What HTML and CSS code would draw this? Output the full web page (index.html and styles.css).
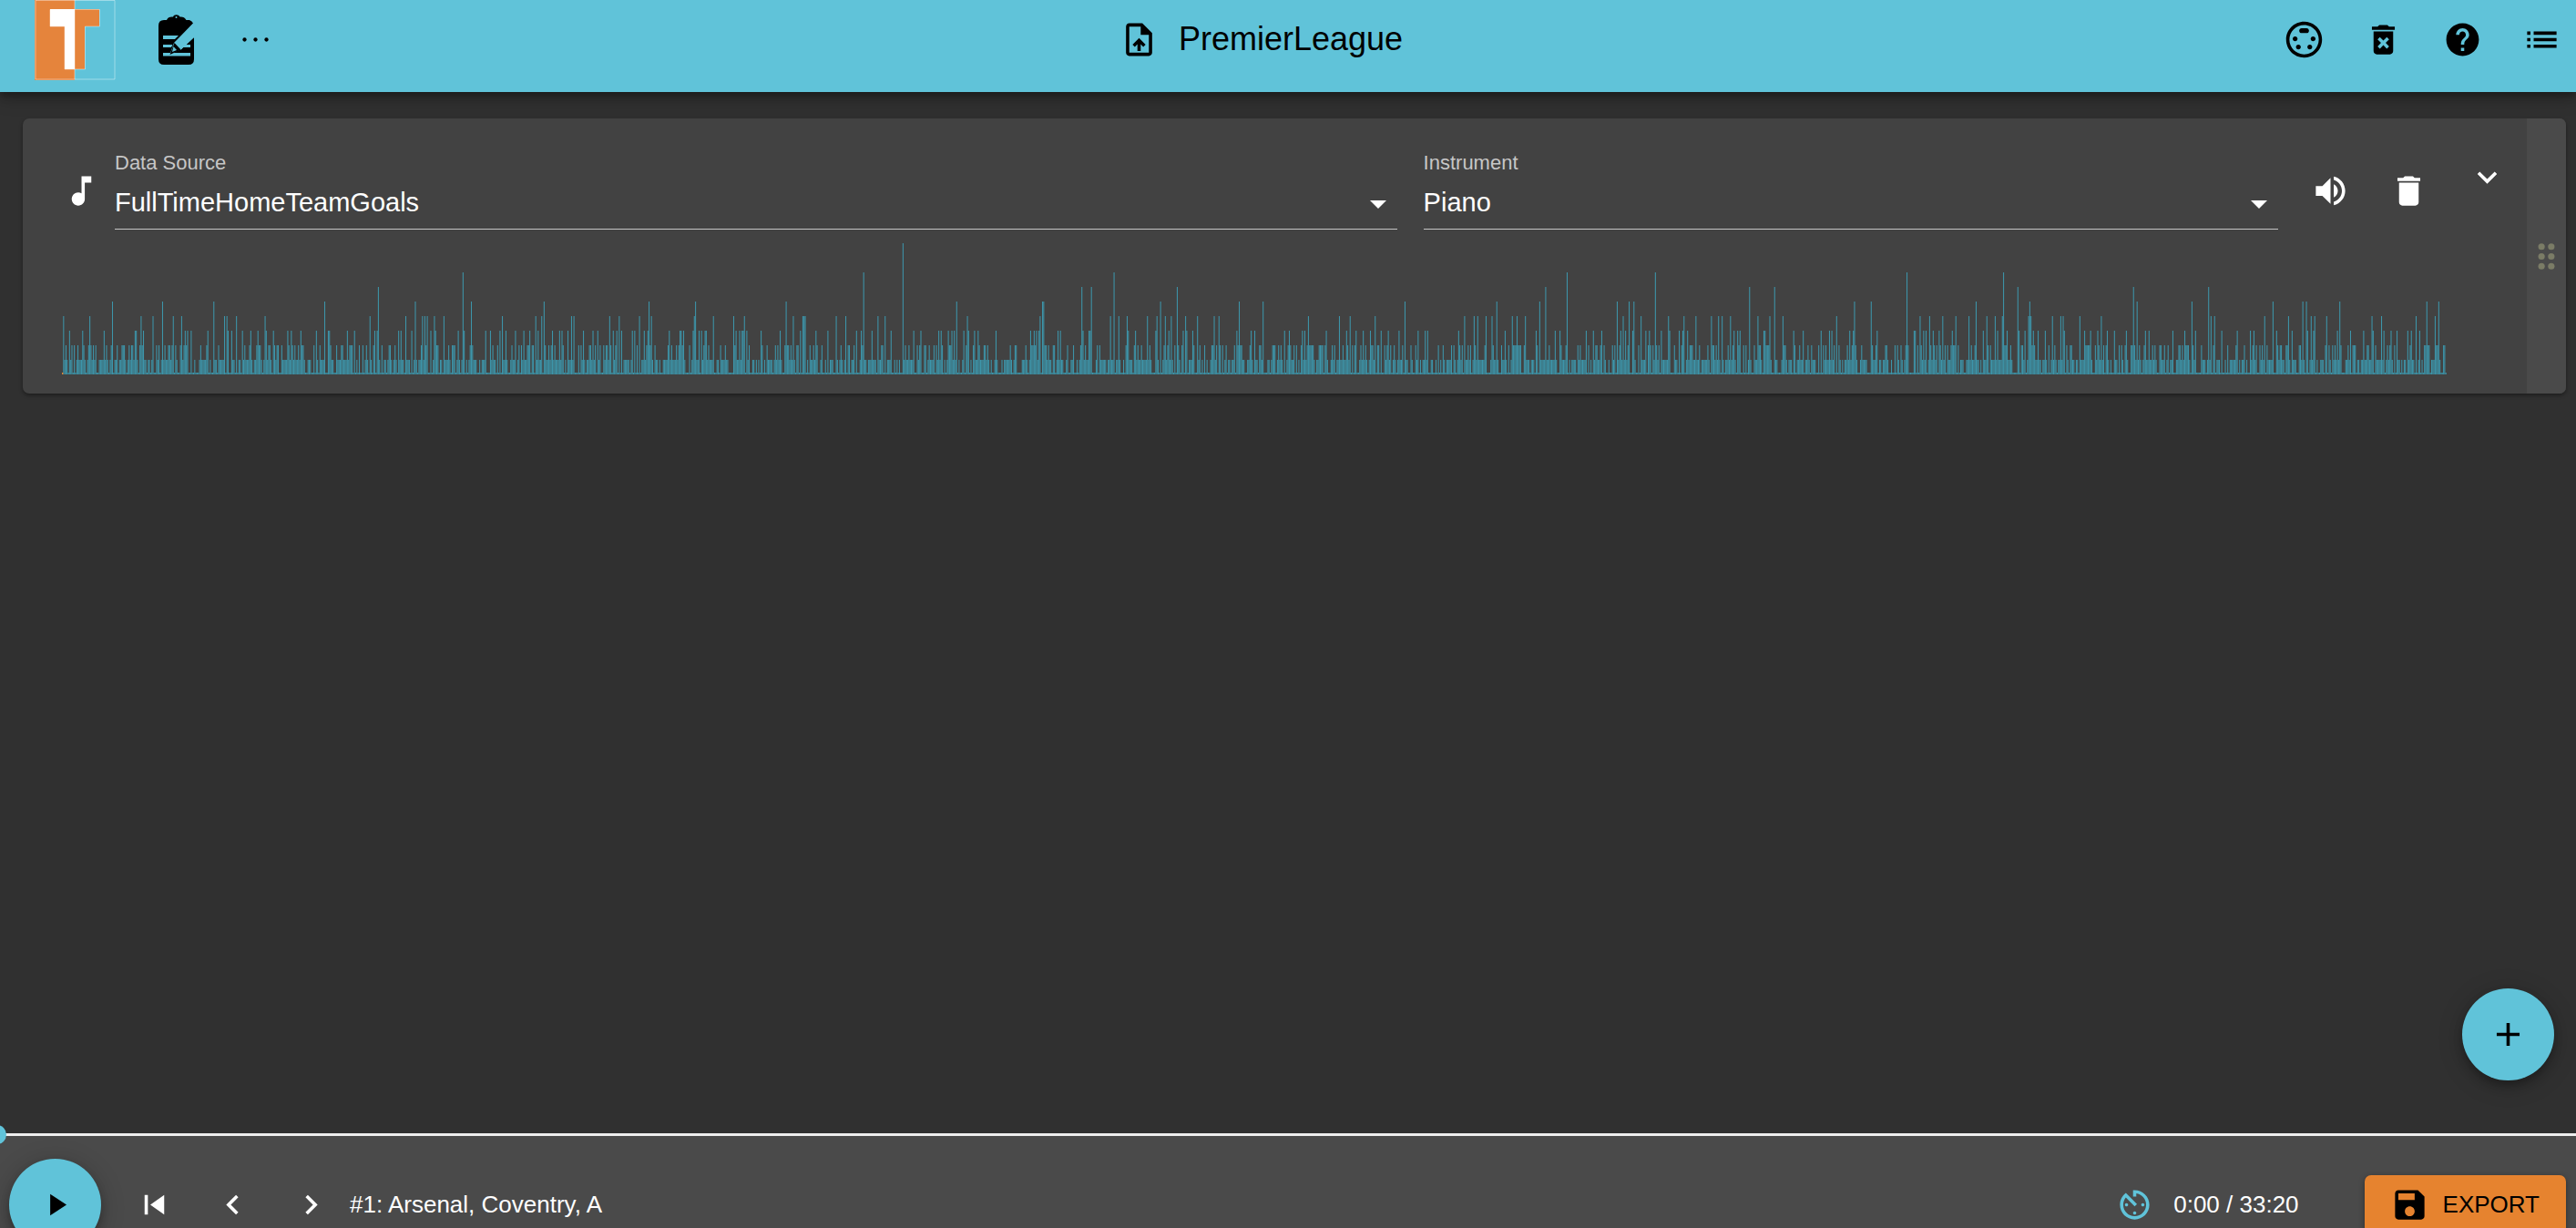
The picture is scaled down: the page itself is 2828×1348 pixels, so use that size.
FILE: index.html
```html
<!DOCTYPE html>
<html lang="en">
<head>
  <meta charset="utf-8">
  <meta name="viewport" content="width=device-width, initial-scale=1">
  <title>PremierLeague</title>
  <link rel="stylesheet" href="styles.css">
</head>
<body>
<div class="app">
  <header class="toolbar">
    <div class="toolbar-side">
      <a class="logo" href="#" aria-label="Home">
        <svg viewBox="0 0 89 88" aria-hidden="true">
          <rect class="logo-fill" x="0" y="0" width="44" height="88"/>
          <path class="logo-white" d="M17 10H44V76H33V29H17Z"/>
          <path class="logo-fill" d="M44 10H71V29H55V76H44Z"/>
          <path class="logo-line" d="M1 .5H88V87H1ZM44 0V87M17 10.5H71.5V29H55.5V76H33V29H17Z"/>
        </svg>
      </a>
      <button class="icon-button" type="button" aria-label="Edit data">
        <svg class="clipboard" viewBox="0 0 40 57" aria-hidden="true">
          <path d="M6 7H9C10 4 13 3 16 3.5C17 .5 22 .5 23.5 3.5C26 3 29 4 30.5 7H34Q37 8 38 10.5L17 32 12.5 44.500 25 39 39 26V50Q39 56 33 56H6Q0 56 0 50V13Q0 7 6 7Z"/>
          <path class="clipboard-cut" d="M5 24H22L18 28H5ZM5 34H15.5L14 37H5ZM30 34H35V37H27ZM5 43H35V46.5H5ZM18 32.5 38 11 39 26 24 40Z"/>
          <path d="M17.5 32 24.5 39.500 12.5 45Z"/>
          <path class="clipboard-cut" d="M16.5 36 20 40 15 42Z"/>
          <circle class="clipboard-cut" cx="19.5" cy="4" r="1"/>
        </svg>
      </button>
      <button class="icon-button" type="button" aria-label="More">
        <svg class="icon" viewBox="0 0 24 24" aria-hidden="true"><circle cx="5.3" cy="12" r="1.2"/><circle cx="12" cy="12" r="1.2"/><circle cx="18.7" cy="12" r="1.2"/></svg>
      </button>
    </div>
    <button class="title-button" type="button">
      <svg class="icon" viewBox="0 0 24 24" aria-hidden="true"><path d="M14 2H6c-1.1 0-1.99.9-1.99 2L4 20c0 1.1.89 2 1.99 2H18c1.1 0 2-.9 2-2V8l-6-6zm4 18H6V4h7v5h5v11zM8 15.01l1.41 1.41L11 14.84V19h2v-4.16l1.59 1.59L16 15.01 12.01 11 8 15.01z"/></svg>
      <span>PremierLeague</span>
    </button>
    <div class="toolbar-side toolbar-end">
      <button class="icon-button" type="button" aria-label="MIDI">
        <svg class="icon" viewBox="0 0 24 24" aria-hidden="true"><path d="M8 11.5c0-.83-.67-1.5-1.5-1.5S5 10.67 5 11.5 5.67 13 6.5 13 8 12.33 8 11.5zm7-5c0-.83-.67-1.5-1.5-1.5h-3C9.67 5 9 5.67 9 6.5S9.67 8 10.5 8h3c.83 0 1.5-.67 1.5-1.5zM8.5 15c-.83 0-1.5.67-1.5 1.5S7.67 18 8.5 18s1.5-.67 1.5-1.5S9.33 15 8.5 15zM12 1C5.93 1 1 5.93 1 12s4.93 11 11 11 11-4.93 11-11S18.07 1 12 1zm0 20c-4.96 0-9-4.04-9-9s4.04-9 9-9 9 4.04 9 9-4.04 9-9 9zm5.5-11c-.83 0-1.5.67-1.5 1.5s.67 1.5 1.5 1.5 1.5-.67 1.5-1.5-.67-1.5-1.5-1.5zm-2 5c-.83 0-1.5.67-1.5 1.5s.67 1.5 1.5 1.5 1.5-.67 1.5-1.5-.67-1.5-1.5-1.5z"/></svg>
      </button>
      <button class="icon-button" type="button" aria-label="Delete all">
        <svg class="icon" viewBox="0 0 24 24" aria-hidden="true"><path d="M6 19c0 1.1.9 2 2 2h8c1.1 0 2-.9 2-2V7H6v12zm2.46-7.12l1.41-1.41L12 12.59l2.12-2.12 1.41 1.41L13.41 14l2.12 2.12-1.41 1.41L12 15.41l-2.12 2.12-1.41-1.41L10.59 14l-2.13-2.12zM15.5 4l-1-1h-5l-1 1H5v2h14V4z"/></svg>
      </button>
      <button class="icon-button" type="button" aria-label="Help">
        <svg class="icon" viewBox="0 0 24 24" aria-hidden="true"><path d="M12 2C6.48 2 2 6.48 2 12s4.48 10 10 10 10-4.48 10-10S17.52 2 12 2zm1 17h-2v-2h2v2zm2.07-7.75l-.9.92C13.45 12.9 13 13.5 13 15h-2v-.5c0-1.1.45-2.1 1.17-2.83l1.24-1.26c.37-.36.59-.86.59-1.41 0-1.1-.9-2-2-2s-2 .9-2 2H8c0-2.21 1.79-4 4-4s4 1.79 4 4c0 .88-.36 1.68-.93 2.25z"/></svg>
      </button>
      <button class="icon-button" type="button" aria-label="Track list">
        <svg class="icon" viewBox="0 0 24 24" aria-hidden="true"><path d="M3 13h2v-2H3v2zm0 4h2v-2H3v2zm0-8h2V7H3v2zm4 4h14v-2H7v2zm0 4h14v-2H7v2zM7 7v2h14V7H7z"/></svg>
      </button>
    </div>
  </header>

  <main class="tracks">
    <article class="track">
      <div class="track-main">
        <div class="track-controls">
          <svg class="icon" viewBox="0 0 24 24" aria-hidden="true"><path d="M12 3v10.55c-.59-.34-1.27-.55-2-.55-2.21 0-4 1.79-4 4s1.79 4 4 4 4-1.79 4-4V7h4V3h-6z"/></svg>
          <div class="fields">
            <div class="field">
              <label for="source">Data Source</label>
              <select id="source"><option>FullTimeHomeTeamGoals</option></select>
            </div>
            <div class="field">
              <label for="instrument">Instrument</label>
              <select id="instrument"><option>Piano</option></select>
            </div>
          </div>
          <div class="track-actions">
            <button class="icon-button" type="button" aria-label="Mute">
              <svg class="icon" viewBox="0 0 24 24" aria-hidden="true"><path d="M3 9v6h4l5 5V4L7 9H3zm13.5 3c0-1.77-1.02-3.29-2.5-4.03v8.05c1.48-.73 2.5-2.25 2.5-4.02zM14 3.23v2.06c2.89.86 5 3.54 5 6.71s-2.11 5.85-5 6.71v2.06c4.01-.91 7-4.49 7-8.77s-2.99-7.86-7-8.77z"/></svg>
            </button>
            <button class="icon-button" type="button" aria-label="Delete track">
              <svg class="icon" viewBox="0 0 24 24" aria-hidden="true"><path d="M6 19c0 1.1.9 2 2 2h8c1.1 0 2-.9 2-2V7H6v12zM19 4h-3.5l-1-1h-5l-1 1H5v2h14V4z"/></svg>
            </button>
            <button class="icon-button expand" type="button" aria-label="Expand">
              <svg class="icon" viewBox="0 0 24 24" aria-hidden="true"><path d="M16.59 8.59L12 13.17 7.41 8.59 6 10l6 6 6-6z"/></svg>
            </button>
          </div>
        </div>
        <svg class="wave" viewBox="0 0 2000 144" preserveAspectRatio="none" role="img" aria-label="Goals per match">
          <path class="wave-bars" id="bars"/>
          <rect class="wave-cursor" x="0" y="142" width="1" height="2"/>
        </svg>
      </div>
      <div class="drag-handle">
        <svg class="icon" viewBox="0 0 24 24" aria-hidden="true"><circle cx="9" cy="6" r="2"/><circle cx="15" cy="6" r="2"/><circle cx="9" cy="12" r="2"/><circle cx="15" cy="12" r="2"/><circle cx="9" cy="18" r="2"/><circle cx="15" cy="18" r="2"/></svg>
      </div>
    </article>
    <button class="fab add" type="button" aria-label="Add track">
      <svg class="icon" viewBox="0 0 24 24" aria-hidden="true"><path d="M19 13h-6v6h-2v-6H5v-2h6V5h2v6h6v2z"/></svg>
    </button>
  </main>

  <footer class="player">
    <input class="seek" type="range" min="0" max="2000" value="0" aria-label="Position">
    <div class="player-row">
      <div class="transport">
        <button class="fab" type="button" aria-label="Play">
          <svg class="icon" viewBox="0 0 24 24" aria-hidden="true"><path d="M9 5.5v13l10-6.5z"/></svg>
        </button>
        <div class="steps">
          <button class="icon-button" type="button" aria-label="Back to start">
            <svg class="icon" viewBox="0 0 24 24" aria-hidden="true"><path d="M6 6h2v12H6zm3.5 6l8.5 6V6z"/></svg>
          </button>
          <button class="icon-button" type="button" aria-label="Previous">
            <svg class="icon" viewBox="0 0 24 24" aria-hidden="true"><path d="M15.41 7.41L14 6l-6 6 6 6 1.41-1.41L10.83 12z"/></svg>
          </button>
          <button class="icon-button" type="button" aria-label="Next">
            <svg class="icon" viewBox="0 0 24 24" aria-hidden="true"><path d="M10 6L8.59 7.41 13.17 12l-4.58 4.59L10 18l6-6z"/></svg>
          </button>
          <span>#1: Arsenal, Coventry, A</span>
        </div>
      </div>
      <div class="output">
        <div class="timing">
          <button class="icon-button timer" type="button" aria-label="Tempo">
            <svg class="icon" viewBox="0 0 24 24" aria-hidden="true"><path d="M11 17c0 .55.45 1 1 1s1-.45 1-1-.45-1-1-1-1 .45-1 1zm0-14v4h2V5.08c3.39.49 6 3.39 6 6.92 0 3.87-3.13 7-7 7s-7-3.13-7-7c0-1.68.59-3.22 1.58-4.42L12 13l1.41-1.41-6.8-6.8v.02C4.42 6.45 3 9.05 3 12c0 4.97 4.02 9 9 9 4.97 0 9-4.03 9-9s-4.03-9-9-9h-1zm7 9c0-.55-.45-1-1-1s-1 .45-1 1 .45 1 1 1 1-.45 1-1zM6 12c0 .55.45 1 1 1s1-.45 1-1-.45-1-1-1-1 .45-1 1z"/></svg>
          </button>
          <span>0:00 / 33:20</span>
        </div>
        <button class="export" type="button">
          <svg class="icon" viewBox="0 0 24 24" aria-hidden="true"><path d="M17 3H5c-1.11 0-2 .9-2 2v14c0 1.1.89 2 2 2h14c1.1 0 2-.9 2-2V7l-4-4zm-5 16c-1.66 0-3-1.34-3-3s1.34-3 3-3 3 1.34 3 3-1.34 3-3 3zm3-10H5V5h10v4z"/></svg>
          EXPORT
        </button>
      </div>
    </div>
  </footer>
</div>
<script src="wave.js"></script>
</body>
</html>
```
FILE: styles.css
```css
* {
  box-sizing: border-box;
}

body {
  margin: 0;
  background: #303030;
  color: #fff;
  font-family: "Liberation Sans", Arial, sans-serif;
  font-size: 26px;
}

button {
  margin: 0;
  padding: 0;
  border: 0;
  background: none;
  color: inherit;
  font: inherit;
  cursor: pointer;
}

svg {
  display: block;
  flex: none;
}

.app {
  display: grid;
  grid-template-rows: auto 1fr 104px;
  height: 100vh;
  overflow: hidden;
}

.icon {
  width: 43px;
  height: 43px;
  fill: currentColor;
}

.icon-button {
  display: flex;
  align-items: center;
  justify-content: center;
  width: 86px;
  height: 86px;
}

/* Top bar */
.toolbar {
  display: flex;
  align-items: flex-start;
  justify-content: space-between;
  height: 101px;
  background: #60c3d9;
  color: #000;
  box-shadow: 0 4px 8px rgba(0, 0, 0, 0.3), 0 8px 18px rgba(0, 0, 0, 0.2);
}

.toolbar-side {
  display: flex;
  padding-left: 38px;
}

.toolbar-end {
  gap: 1px;
  margin-right: -5px;
  padding-left: 0;
}

.logo {
  width: 89px;
  height: 88px;
  margin-right: 24px;
}

.logo-fill {
  fill: #e5843c;
}

.logo-white {
  fill: #fff;
}

.logo-line {
  fill: none;
  stroke: rgba(255, 255, 255, 0.4);
  stroke-width: 1;
}

.clipboard {
  width: 40px;
  height: 57px;
}

.clipboard-cut {
  fill: #60c3d9;
}

.title-button {
  display: flex;
  align-items: center;
  gap: 22px;
  height: 86px;
  padding-right: 40px;
  font-size: 36px;
}

/* Track list */
.tracks {
  position: relative;
  padding: 29px 11px 0 25px;
}

.track {
  display: flex;
  border-radius: 7px;
  background: #424242;
  box-shadow: 0 2px 4px rgba(0, 0, 0, 0.4);
  overflow: hidden;
}

.track-main {
  flex: 1;
  padding: 36px 1px 21px 43px;
}

.track-controls {
  display: flex;
  align-items: center;
}

.fields {
  display: grid;
  flex: 1;
  grid-template-columns: 3fr 2fr;
  gap: 29px;
  margin: 0 14px 0 15px;
}

.field {
  position: relative;
  display: flex;
  flex-direction: column;
}

.field label {
  color: #c6c6c6;
  font-size: 22px;
  line-height: 26px;
}

.field select {
  height: 60px;
  padding: 0;
  border: 0;
  border-bottom: 1px solid #c6c6c6;
  border-radius: 0;
  background: none;
  color: #fff;
  font: inherit;
  font-size: 29px;
  appearance: none;
}

.field::after {
  content: "";
  position: absolute;
  right: 12px;
  bottom: 23px;
  border: 9px solid transparent;
  border-top-color: #fff;
  border-bottom: 0;
  pointer-events: none;
}

.track-actions {
  display: flex;
}

.expand {
  height: 57px;
}

.wave {
  width: calc(100% - 87px);
  height: 144px;
  margin-top: 15px;
}

.wave-bars {
  fill: #3d95aa;
}

.wave-cursor {
  fill: #e6832f;
}

.drag-handle {
  display: flex;
  align-items: center;
  width: 43px;
  background: #4a4a4a;
  color: #7b7c66;
}

/* Round buttons */
.fab {
  display: flex;
  align-items: center;
  justify-content: center;
  width: 101px;
  height: 101px;
  border-radius: 50%;
  background: #60c3d9;
  color: #000;
  box-shadow: 0 6px 10px rgba(0, 0, 0, 0.25), 0 4px 28px rgba(0, 0, 0, 0.2);
}

.add {
  position: absolute;
  right: 24px;
  bottom: 58px;
}

/* Player */
.player {
  position: relative;
  background: #4a4a4a;
}

.seek {
  display: block;
  width: calc(100% + 14px);
  height: 3px;
  margin: 0 0 0 -14px;
  background: #eee;
  appearance: none;
}

.seek::-webkit-slider-thumb {
  width: 21px;
  height: 21px;
  border-radius: 50%;
  background: #60c3d9;
  appearance: none;
}

.player-row {
  display: flex;
  justify-content: space-between;
  padding: 25px 11px 25px 10px;
}

.transport,
.steps,
.output,
.timing {
  display: flex;
  align-items: center;
}

.transport {
  gap: 15px;
}

.output {
  gap: 72px;
}

.timer {
  color: #60c3d9;
}

.export {
  display: flex;
  align-items: center;
  gap: 15px;
  height: 65px;
  padding: 0 29px 0 28px;
  border-radius: 7px;
  background: #e6832f;
  color: #000;
  box-shadow: 0 2px 6px rgba(0, 0, 0, 0.4);
}
```
FILE: wave.js
```js
// Plot offsets, on an axis 2618 long, of the matches with three or more home goals.
const highScores = {
  9: [924],
  7: [440, 880, 1155, 1652, 1750, 2026, 2132],
  6: [347, 1120, 1130, 1224, 1629, 1853, 1881, 2148, 2274, 2357],
  5: [55, 111, 167, 289, 388, 449, 530, 645, 696, 795, 983, 1077, 1078, 1206, 1293, 1319, 1474,
    1576, 1622, 1708, 1721, 1726, 1968, 1986, 2102, 2161, 2278, 2339, 2428, 2460, 2464, 2501,
    2596, 2609],
  4: [2, 31, 87, 100, 122, 131, 179, 181, 192, 223, 338, 377, 396, 399, 401, 409, 419, 484, 520,
    527, 529, 559, 562, 601, 612, 634, 647, 695, 715, 738, 749, 803, 814, 815, 816, 850, 861, 896,
    904, 994, 1074, 1151, 1161, 1169, 1192, 1202, 1211, 1218, 1234, 1247, 1265, 1270, 1271, 1369,
    1402, 1414, 1442, 1540, 1550, 1555, 1563, 1570, 1593, 1597, 1607, 1714, 1734, 1764, 1781, 1794,
    1811, 1819, 1823, 1832, 1862, 1875, 1890, 1948, 2040, 2050, 2065, 2079, 2094, 2113, 2123, 2131,
    2159, 2162, 2185, 2194, 2197, 2215, 2239, 2359, 2364, 2419, 2445, 2470, 2474, 2487, 2536, 2547,
    2584, 2606],
  3: [9, 23, 47, 80, 82, 90, 135, 138, 142, 161, 182, 186, 198, 207, 215, 224, 233, 248, 252, 263,
    279, 292, 294, 314, 321, 343, 346, 370, 373, 384, 405, 411, 435, 442, 465, 470, 481, 488, 498,
    507, 514, 523, 538, 546, 549, 556, 573, 583, 588, 605, 609, 614, 626, 629, 639, 644, 667, 679,
    680, 683, 693, 700, 702, 706, 708, 740, 744, 747, 748, 752, 768, 789, 811, 828, 841, 873, 878,
    890, 910, 935, 943, 963, 965, 973, 977, 980, 990, 996, 1002, 1006, 1026, 1064, 1067, 1070,
    1073, 1094, 1096, 1121, 1128, 1129, 1171, 1179, 1201, 1216, 1231, 1235, 1242, 1290, 1306, 1309,
    1342, 1348, 1362, 1365, 1388, 1410, 1411, 1421, 1429, 1437, 1449, 1456, 1468, 1489, 1497, 1500,
    1534, 1584, 1619, 1623, 1639, 1645, 1674, 1682, 1691, 1711, 1717, 1724, 1739, 1743, 1756, 1765,
    1776, 1780, 1785, 1836, 1840, 1843, 1868, 1870, 1901, 1912, 1931, 1940, 1943, 1963, 1967, 1993,
    2033, 2035, 2044, 2047, 2055, 2061, 2076, 2109, 2125, 2136, 2147, 2149, 2155, 2164, 2170, 2178,
    2199, 2221, 2227, 2235, 2245, 2253, 2267, 2275, 2287, 2291, 2318, 2331, 2343, 2363, 2371, 2388,
    2403, 2406, 2427, 2432, 2448, 2465, 2472, 2498, 2512, 2527, 2538, 2549, 2557, 2564, 2575, 2579,
    2589]
};

const matches = 2000;
const step = 16;

// The remaining matches have zero to two goals.
let seed = 11;
const goals = Array.from({ length: matches }, () => {
  seed = (seed * 48271) % 2147483647;
  const r = seed / 2147483647;
  return r < 0.3 ? 0 : r < 0.74 ? 1 : 2;
});

for (const [count, offsets] of Object.entries(highScores)) {
  for (const offset of offsets) {
    const index = Math.floor(offset * matches / 2618);
    goals[index] = Math.max(goals[index], Number(count));
  }
}

document.getElementById("bars").setAttribute("d", goals.map((count, i) => {
  const height = count * step || 2;
  return `M${i} ${144 - height}h0.8v${height}h-0.8z`;
}).join(""));
```
